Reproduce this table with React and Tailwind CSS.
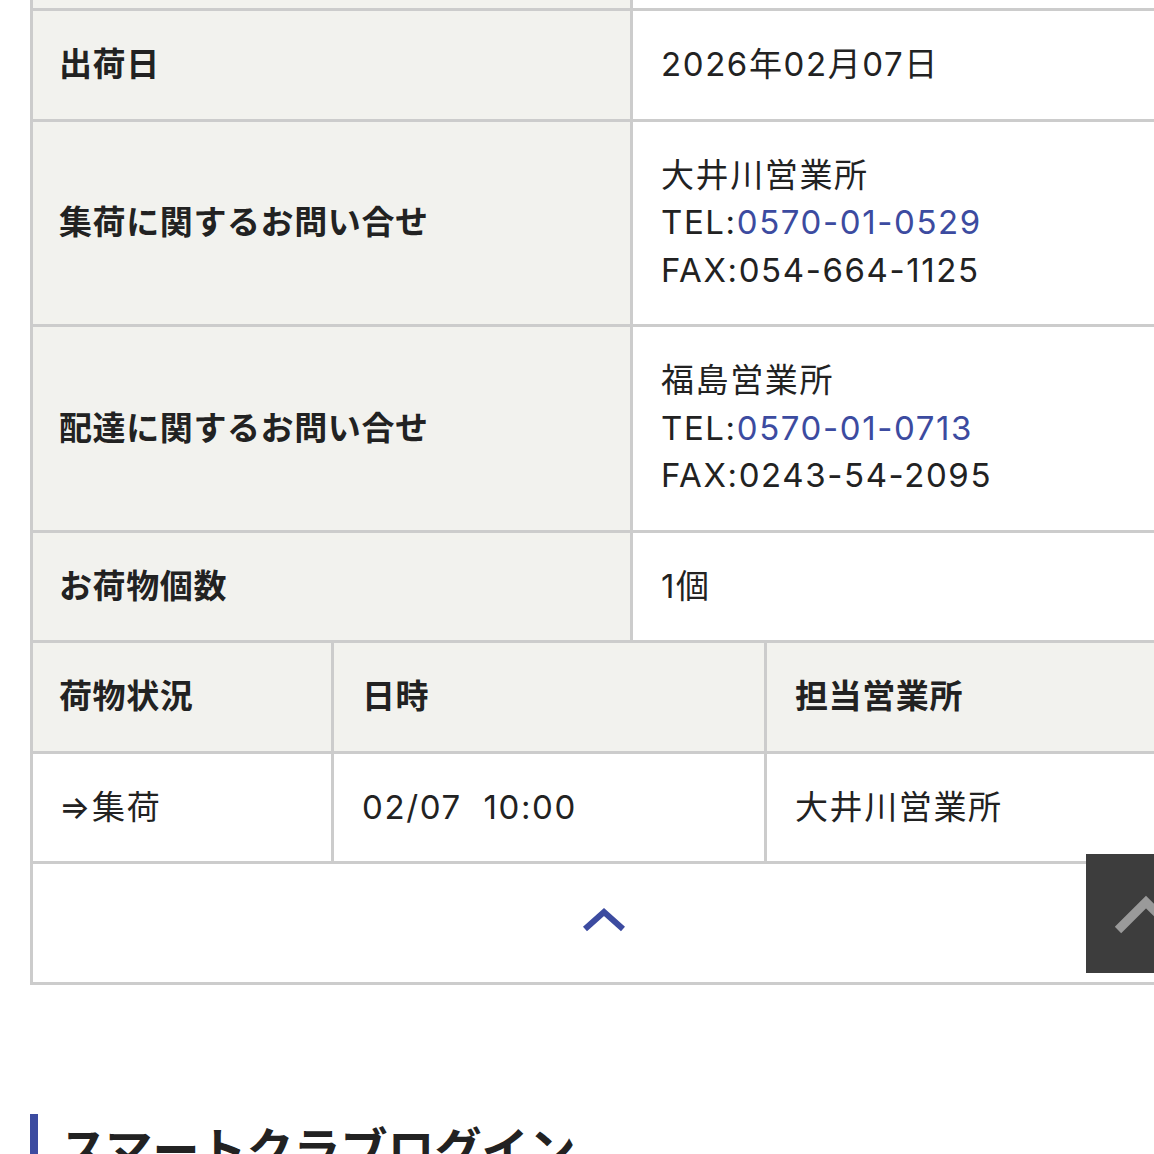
import { useState } from "react";

const FONT = "font-['Inter','Noto_Sans_CJK_JP',sans-serif]";
const HEAD = "bg-[#f2f2ee] font-bold text-[#222] tracking-[0.6px]";
const CELL = "tracking-[1.6px]";

const InfoRow = ({ label, children }) => (
  <div className="flex border-b-[3px] border-[#cccccc]">
    <div className={`w-[600px] shrink-0 flex items-center border-r-[3px] border-[#cccccc] px-[26px] ${HEAD}`}>
      {label}
    </div>
    <div className={`flex-1 bg-white px-[28px] py-[30px] text-[#222] ${CELL}`}>{children}</div>
  </div>
);

const Tel = ({ num }) => (
  <a href="#" className="text-[#3c4ba0]">
    {num}
  </a>
);

const Office = ({ name, tel, fax }) => (
  <div className="flex flex-col">
    <span>{name}</span>
    <span>
      TEL:<Tel num={tel} />
    </span>
    <span>FAX:{fax}</span>
  </div>
);

const App = () => {
  const [open, setOpen] = useState(true);

  return (
    <div className={`relative w-full h-[1154px] overflow-hidden bg-white text-[33px] leading-[47.5px] ${FONT}`}>
      <div className="pl-[30px]">
        <div className="w-[1144px] border-l-[3px] border-[#cccccc]">
          {/* row cut off at the top */}
          <div className="flex h-[11px] border-b-[3px] border-[#cccccc]">
            <div className="w-[600px] shrink-0 border-r-[3px] border-[#cccccc] bg-[#f2f2ee]" />
            <div className="flex-1 bg-white" />
          </div>

          <InfoRow label="出荷日">2026年02月07日</InfoRow>
          <InfoRow label="集荷に関するお問い合せ">
            <Office name="大井川営業所" tel="0570-01-0529" fax="054-664-1125" />
          </InfoRow>
          <InfoRow label="配達に関するお問い合せ">
            <Office name="福島営業所" tel="0570-01-0713" fax="0243-54-2095" />
          </InfoRow>
          <InfoRow label="お荷物個数">1個</InfoRow>

          {/* status table */}
          <div className={`flex border-b-[3px] border-[#cccccc] ${HEAD}`}>
            <div className="w-[301px] shrink-0 border-r-[3px] border-[#cccccc] px-[26px] py-[30px]">荷物状況</div>
            <div className="w-[433px] shrink-0 border-r-[3px] border-[#cccccc] px-[28px] py-[30px]">日時</div>
            <div className="flex-1 px-[28px] py-[30px]">担当営業所</div>
          </div>
          <div className={`flex border-b-[3px] border-[#cccccc] bg-white text-[#222] ${CELL}`}>
            <div className="w-[301px] shrink-0 border-r-[3px] border-[#cccccc] px-[26px] py-[30px]">⇒集荷</div>
            <div className="w-[433px] shrink-0 border-r-[3px] border-[#cccccc] px-[28px] py-[30px]">02/07&nbsp; 10:00</div>
            <div className="flex-1 px-[28px] py-[30px]">大井川営業所</div>
          </div>

          <button
            onClick={() => setOpen(!open)}
            className="flex h-[121px] w-full items-start justify-center border-b-[3px] border-[#cccccc] bg-white pt-[40px]"
          >
            <svg width="46" height="30" viewBox="0 0 46 30" className={open ? "" : "rotate-180"}>
              <path d="M4 25 L23 8 L42 25" fill="none" stroke="#3c4ba0" strokeWidth="6" />
            </svg>
          </button>
        </div>

        <div className="mt-[129px] border-l-[8px] border-[#3c4ba0] pl-[22px] pt-[6px]">
          <h2 className="text-[47px] font-bold leading-[60px] text-[#222]">スマートクラブログイン</h2>
        </div>
      </div>

      {/* page-top button */}
      <a href="#" className="absolute left-[1086px] top-[854px] flex h-[119px] w-[120px] items-center justify-center bg-[#3d3d3d]">
        <svg width="64" height="40" viewBox="0 0 64 40">
          <path d="M4 36 L32 8 L60 36" fill="none" stroke="#9a9a9a" strokeWidth="9" />
        </svg>
      </a>
    </div>
  );
};

export default App;
